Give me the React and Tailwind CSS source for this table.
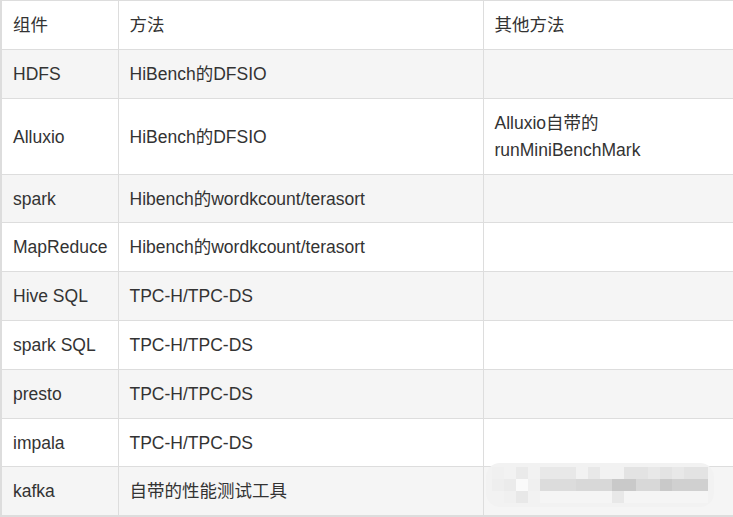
import React from "react";

const rows = [
  { a: "HDFS", b: "HiBench的DFSIO", c: "" },
  { a: "Alluxio", b: "HiBench的DFSIO", c: ["Alluxio自带的", "runMiniBenchMark"] },
  { a: "spark", b: "Hibench的wordkcount/terasort", c: "", short: true },
  { a: "MapReduce", b: "Hibench的wordkcount/terasort", c: "" },
  { a: "Hive SQL", b: "TPC-H/TPC-DS", c: "" },
  { a: "spark SQL", b: "TPC-H/TPC-DS", c: "" },
  { a: "presto", b: "TPC-H/TPC-DS", c: "" },
  { a: "impala", b: "TPC-H/TPC-DS", c: "", short: true },
  { a: "kafka", b: "自带的性能测试工具", c: "", blur: true },
];

// pixelated watermark blur in the last cell
const blurRows = [
  ["#f0f0f0", "#f2f2f2", "#eaeaea", "#f2f2f2", "#e8e8e8", "#e8e8e8", "#e8e8e8", "#f2f2f2", "#e8e8e8", "#f2f2f2", "#f2f2f2", "#e3e3e3", "#e3e3e3", "#e8e8e8", "#e3e3e3", "#e8e8e8", "#e3e3e3", "#e3e3e3"],
  ["#eeeeee", "#ebebeb", "#fafafa", "#f0f0f0", "#dcdcdc", "#dcdcdc", "#dcdcdc", "#d8d8d8", "#d8d8d8", "#d8d8d8", "#c9c9c9", "#c9c9c9", "#d8d8d8", "#d8d8d8", "#c9c9c9", "#d0d0d0", "#d0d0d0", "#d0d0d0"],
  ["#f2f2f2", "#f0f0f0", "#e8e8e8", "#f2f2f2", "#f5f5f5", "#f5f5f5", "#f5f5f5", "#f5f5f5", "#f5f5f5", "#f5f5f5", "#e8e8e8", "#f5f5f5", "#f5f5f5", "#f5f5f5", "#f5f5f5", "#f5f5f5", "#f5f5f5", "#f5f5f5"],
];

function Blur() {
  return (
    <div className="absolute left-[2px] top-[-4px] flex flex-col rounded-[14px] bg-[#f2f2f2] px-[6px] py-[4px]">
      {blurRows.map((r, i) => (
        <div key={i} className="flex">
          {r.map((c, j) => (
            <div key={j} className="h-[12px] w-[12px]" style={{ background: c }} />
          ))}
        </div>
      ))}
    </div>
  );
}

const cell = "border border-[#dddddd] px-[11px] pt-[11px] align-middle leading-[27px]";

export default function App() {
  return (
    <div className="w-[733px] h-[517px] bg-white text-[#333333] text-[17.5px] font-['Liberation_Sans','Noto_Sans_CJK_SC',sans-serif]">
      <table className="w-[733px] table-fixed border-collapse border-2 border-[#dddddd] border-t">
        <colgroup>
          <col className="w-[117px]" />
          <col className="w-[365px]" />
          <col className="w-[251px]" />
        </colgroup>
        <thead>
          <tr className="bg-white">
            <th className={`${cell} pb-[10px] text-left font-normal`}>组件</th>
            <th className={`${cell} pb-[10px] text-left font-normal`}>方法</th>
            <th className={`${cell} pb-[10px] text-left font-normal`}>其他方法</th>
          </tr>
        </thead>
        <tbody>
          {rows.map((r, i) => {
            const pb = r.short ? "pb-[9px]" : "pb-[10px]";
            return (
              <tr key={i} className={i % 2 === 0 ? "bg-[#f5f5f5]" : "bg-white"}>
                <td className={`${cell} ${pb} whitespace-nowrap`}>{r.a}</td>
                <td className={`${cell} ${pb}`}>{r.b}</td>
                <td className={`${cell} ${pb} relative`}>
                  {Array.isArray(r.c) ? r.c.map((l) => <div key={l}>{l}</div>) : r.c || "\u00a0"}
                  {r.blur && <Blur />}
                </td>
              </tr>
            );
          })}
        </tbody>
      </table>
    </div>
  );
}
